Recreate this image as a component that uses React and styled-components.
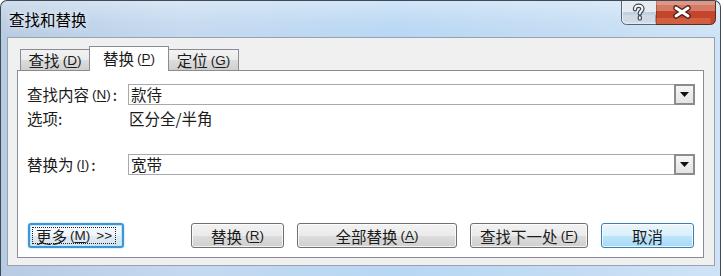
import React from "react";
import styled, { createGlobalStyle, css } from "styled-components";

const CJK = `"Noto Sans CJK SC", "Liberation Sans", sans-serif`;

const GlobalStyle = createGlobalStyle`
  html, body {
    margin: 0;
    padding: 0;
    background: #ffffff;
  }
  body {
    font-family: ${CJK};
    font-size: 15px;
    color: #1b1b1b;
  }
`;

const Window = styled.div`
  width: 721px;
  height: 276px;
  box-sizing: border-box;
  border: 1px solid #3d4a58;
  border-bottom: none;
  border-radius: 7px 7px 0 0;
  display: flex;
  flex-direction: column;
  background: linear-gradient(
    90deg,
    #b7cbe2 0%,
    #c4d9ef 25%,
    #b8d7f4 55%,
    #c3dcf3 80%,
    #cfe3f6 100%
  );
`;

const TitleBar = styled.div`
  height: 36px;
  display: flex;
  padding-left: 8px;
  border-radius: 7px 7px 0 0;
  background: linear-gradient(
    180deg,
    rgba(255, 255, 255, 0.35) 0%,
    rgba(255, 255, 255, 0.08) 60%,
    rgba(255, 255, 255, 0) 100%
  );
`;

const Title = styled.div`
  align-self: center;
  font-size: 15.5px;
  color: #000;
  text-shadow: 0 0 6px rgba(255, 255, 255, 0.9);
`;

const CaptionButtons = styled.div`
  margin-left: auto;
  margin-right: 4px;
  display: flex;
  align-self: flex-start;
  height: 24px;
  svg {
    display: block;
  }
`;

const Client = styled.div`
  flex: 1;
  margin: 0 5px 10px 6px;
  box-sizing: border-box;
  border: 1px solid #9aa3ad;
  background: #f0f0f0;
  padding: 8px 10px 7px 9px;
  display: flex;
  flex-direction: column;
`;

const TabStrip = styled.div`
  display: flex;
  align-items: flex-end;
  padding-left: 3px;
  height: 24px;
  position: relative;
  z-index: 1;
`;

const Tab = styled.div`
  box-sizing: border-box;
  display: flex;
  align-items: center;
  justify-content: center;
  border: 1px solid #898c95;
  border-bottom: none;
  font-size: 15.5px;
  width: ${(p) => p.$width}px;
  & + & {
    margin-left: -1px;
  }
  ${(p) =>
    p.$active
      ? css`
          height: 25px;
          margin-bottom: -1px;
          background: #ffffff;
          padding-bottom: 2px;
        `
      : css`
          height: 21px;
          background: linear-gradient(180deg, #f2f2f2 0%, #ebebeb 50%, #dddddd 51%, #cfcfcf 100%);
        `}
`;

const Key = styled.span`
  font-family: "Liberation Sans", sans-serif;
  font-size: 13.5px;
  margin-left: 3px;
  u {
    text-underline-offset: 2px;
  }
`;

const Panel = styled.div`
  flex: 1;
  box-sizing: border-box;
  background: #ffffff;
  border: 1px solid #898c95;
  padding: 12px 8px 9px 9px;
  display: flex;
  flex-direction: column;
`;

const FieldRow = styled.div`
  display: grid;
  grid-template-columns: 101px 1fr;
  align-items: center;
  height: ${(p) => p.$height || 21}px;
  margin-top: ${(p) => p.$gap || 0}px;
`;

const Label = styled.div`
  font-size: 15.5px;
  white-space: nowrap;
  display: flex;
  align-items: center;
`;

const Colon = styled.span`
  margin-left: 2px;
`;

const Combo = styled.div`
  height: 21px;
  box-sizing: border-box;
  border: 1px solid #a7a9ad;
  display: flex;
  align-items: center;
  padding-left: 2px;
`;

const ComboText = styled.div`
  flex: 1;
  font-size: 15.5px;
`;

const DropButton = styled.div`
  width: 21px;
  height: 21px;
  margin: -1px -1px -1px 0;
  box-sizing: border-box;
  border: 2px solid #8c8c8c;
  background: linear-gradient(180deg, #f6f6f6 0%, #e3e3e3 100%);
  display: flex;
  align-items: center;
  justify-content: center;
`;

const OptionValue = styled.div`
  font-size: 15.5px;
  padding-left: 1px;
`;

const ButtonRow = styled.div`
  margin-top: auto;
  display: flex;
  align-items: center;
  padding-left: 1px;
`;

const Actions = styled.div`
  margin-left: auto;
  margin-right: 1px;
  display: flex;
  gap: 13px;
`;

const Button = styled.div`
  width: ${(p) => p.$width}px;
  height: 25px;
  box-sizing: border-box;
  border-radius: 3px;
  display: flex;
  align-items: center;
  justify-content: center;
  font-size: 15.5px;
  border: 1px solid #707070;
  background: linear-gradient(180deg, #f2f2f2 0%, #ebebeb 50%, #dddddd 51%, #cfcfcf 100%);
  box-shadow: inset 0 0 0 1px rgba(255, 255, 255, 0.75);
  ${(p) =>
    p.$variant === "hot" &&
    css`
      border-color: #3c7fb1;
      background: linear-gradient(180deg, #eaf6fd 0%, #d9f0fc 50%, #bee6fd 51%, #a7d9f5 100%);
    `}
  ${(p) =>
    p.$variant === "focus" &&
    css`
      border: 2px solid #3d94d6;
      background: linear-gradient(180deg, #f7fbfe 0%, #eef5fa 50%, #e1ebf3 51%, #d6e3ee 100%);
      box-shadow: 0 0 2px #8ccbf2, inset 0 0 0 1px #c4e5f9;
      justify-content: flex-start;
      padding: 2px;
    `}
`;

const FocusRing = styled.div`
  height: 100%;
  box-sizing: border-box;
  border: 1px dotted #222;
  display: flex;
  align-items: center;
  padding: 0 3px 0 3px;
  white-space: nowrap;
`;

const Arrows = styled.span`
  font-family: "Liberation Sans", sans-serif;
  font-size: 13.5px;
  margin-left: 6px;
`;

const Mnemonic = ({ k }) => (
  <Key>
    (<u>{k}</u>)
  </Key>
);

const ComboBox = ({ value }) => (
  <Combo>
    <ComboText>{value}</ComboText>
    <DropButton>
      <svg width="9" height="5" viewBox="0 0 9 5">
        <path d="M0 0h9L4.5 5z" fill="#111" />
      </svg>
    </DropButton>
  </Combo>
);

// glass caption buttons, layered solid bands instead of gradients
const QUESTION =
  "M14 8.2c0-2.2 1.7-3.4 3.7-3.4 2.2 0 3.7 1.2 3.7 3 0 2.4-2.6 2.6-2.6 4.6M18.8 16.2v1.2";

const HelpIcon = () => (
  <svg width="35" height="24" viewBox="0 0 35 24">
    <path d="M0.5 0V18.5a5 5 0 0 0 5 5H35V0z" fill="#cfdae6" stroke="#56667a" />
    <rect x="1" y="0" width="34" height="11" fill="#e4ebf2" />
    <rect x="1" y="11" width="34" height="3" fill="#c2cfdc" />
    <path d="M1.5 0V18.2a4 4 0 0 0 4 4H35" fill="none" stroke="#f4f7fa" strokeOpacity="0.7" />
    <path d={QUESTION} fill="none" stroke="#3e4854" strokeWidth="4.4" strokeLinecap="round" />
    <path d={QUESTION} fill="none" stroke="#f6f8fa" strokeWidth="2" strokeLinecap="round" />
  </svg>
);

const CloseIcon = () => (
  <svg width="60" height="24" viewBox="0 0 60 24">
    <path d="M0 0V23.5H54.5a5 5 0 0 0 5-5V0z" fill="#c5452c" stroke="#5b2b24" />
    <rect x="0.5" y="0" width="58.5" height="10" fill="#d47a66" />
    <rect x="0.5" y="0" width="58.5" height="4" fill="#de9787" />
    <rect x="0.5" y="17" width="54" height="6" fill="#d0603f" />
    <path d="M20 7l12 8M32 7l-12 8" stroke="#4a2018" strokeWidth="5.5" strokeLinecap="round" />
    <path d="M20 7l12 8M32 7l-12 8" stroke="#ffffff" strokeWidth="3" strokeLinecap="round" />
  </svg>
);

const tabs = [
  { label: "查找", k: "D", width: 70 },
  { label: "替换", k: "P", width: 80, active: true },
  { label: "定位", k: "G", width: 71 },
];

const actions = [
  { label: "替换", k: "R", width: 93 },
  { label: "全部替换", k: "A", width: 160 },
  { label: "查找下一处", k: "F", width: 118 },
  { label: "取消", width: 93, variant: "hot" },
];

export default function App() {
  return (
    <>
      <GlobalStyle />
      <Window>
        <TitleBar>
          <Title>查找和替换</Title>
          <CaptionButtons>
            <HelpIcon />
            <CloseIcon />
          </CaptionButtons>
        </TitleBar>
        <Client>
          <TabStrip>
            {tabs.map((t) => (
              <Tab key={t.k} $width={t.width} $active={t.active}>
                {t.label}
                <Mnemonic k={t.k} />
              </Tab>
            ))}
          </TabStrip>
          <Panel>
            <FieldRow>
              <Label>
                查找内容
                <Mnemonic k="N" />
                <Colon>:</Colon>
              </Label>
              <ComboBox value="款待" />
            </FieldRow>
            <FieldRow $height={16} $gap={3}>
              <Label>选项:</Label>
              <OptionValue>区分全/半角</OptionValue>
            </FieldRow>
            <FieldRow $gap={30}>
              <Label>
                替换为
                <Mnemonic k="I" />
                <Colon>:</Colon>
              </Label>
              <ComboBox value="宽带" />
            </FieldRow>
            <ButtonRow>
              <Button $width={96} $variant="focus">
                <FocusRing>
                  更多
                  <Mnemonic k="M" />
                  <Arrows>&gt;&gt;</Arrows>
                </FocusRing>
              </Button>
              <Actions>
                {actions.map((a) => (
                  <Button key={a.label} $width={a.width} $variant={a.variant}>
                    {a.label}
                    {a.k && <Mnemonic k={a.k} />}
                  </Button>
                ))}
              </Actions>
            </ButtonRow>
          </Panel>
        </Client>
      </Window>
    </>
  );
}
